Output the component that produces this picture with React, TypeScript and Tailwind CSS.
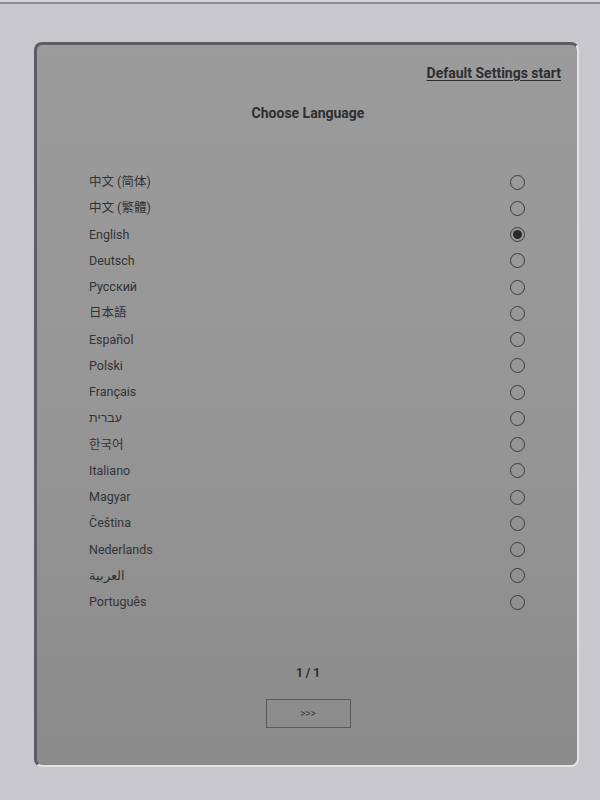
import type React from "react";
import { useState } from "react";

const LANGUAGES = [
  "中文 (简体)",
  "中文 (繁體)",
  "English",
  "Deutsch",
  "Русский",
  "日本語",
  "Español",
  "Polski",
  "Français",
  "עברית",
  "한국어",
  "Italiano",
  "Magyar",
  "Čeština",
  "Nederlands",
  "العربية",
  "Português",
];

const FONT =
  "font-['Roboto','Noto_Sans','Noto_Sans_CJK_SC','Noto_Sans_CJK_KR',sans-serif]";

function Radio({ checked }: { checked: boolean }): React.ReactElement {
  return (
    <div className="flex h-[15px] w-[15px] items-center justify-center rounded-full border-[1.5px] border-[#3c3c3e]">
      {checked && <div className="h-[9px] w-[9px] rounded-full bg-[#2a2a2c]" />}
    </div>
  );
}

export default function App(): React.ReactElement {
  const [selected, setSelected] = useState("English");

  return (
    <div className={`h-[800px] w-[600px] overflow-hidden bg-[#c8c7cb] ${FONT}`}>
      <div className="h-[2px] bg-[#d2d1d5]" />
      <div className="h-[2px] bg-[#8e8d92]" />
      <div className="pl-[34px] pt-[38px]">
        <div className="flex h-[725px] w-[545px] flex-col rounded-[8px] border-b-[2px] border-l-[3px] border-r-[2px] border-t-[3px] border-b-[#e4e3e6] border-l-[#5e5d62] border-r-[#e4e3e6] border-t-[#5e5d62] bg-gradient-to-b from-[#9b9b9b] via-[#969696] to-[#8b8b8b]">
          <div className="mt-[20px] flex justify-end pr-[16px]">
            <span className="text-[14px] font-bold leading-[17px] text-[#2e2e32] underline underline-offset-2">
              Default Settings start
            </span>
          </div>
          <div className="mt-[23px] pl-[2px] text-center text-[14px] font-bold leading-[17px] text-[#2e2e32]">
            Choose Language
          </div>
          <div className="mt-[47px] flex flex-col pl-[52px] pr-[52px]">
            {LANGUAGES.map((lang) => (
              <div
                key={lang}
                className="flex h-[26.25px] cursor-pointer items-center justify-between"
                onClick={() => setSelected(lang)}
              >
                <span className="text-[12.5px] leading-[16px] text-[#333336]">{lang}</span>
                <Radio checked={lang === selected} />
              </div>
            ))}
          </div>
          <div className="mt-[50px] pl-[2px] text-center text-[12px] font-bold leading-[16px] text-[#2a2a2c]">
            1 / 1
          </div>
          <div className="mt-[18px] flex justify-center pl-[2px]">
            <button
              type="button"
              className="flex h-[29px] w-[85px] items-center justify-center border border-[#5a5a5c] text-[10px] leading-none text-[#3a3a3c]"
            >
              &gt;&gt;&gt;
            </button>
          </div>
        </div>
      </div>
    </div>
  );
}
